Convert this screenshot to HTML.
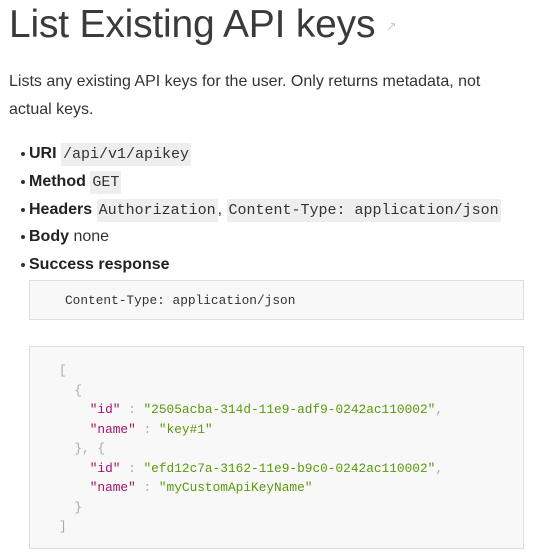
<!DOCTYPE html>
<html><head><meta charset="utf-8"><style>
body{margin:0;background:#fff;width:538px;height:556px;overflow:hidden;font-family:"Liberation Sans",sans-serif;color:#333;position:relative}
h1{position:absolute;left:9px;top:3px;margin:0;font-weight:normal;font-size:39px;color:#3a3a3a;letter-spacing:-0.2px;white-space:nowrap}
h1 span{font-size:13px;color:#ccc;vertical-align:middle}
p{position:absolute;left:9px;top:68px;margin:0;font-size:16px;line-height:28px;width:490px}
ul{position:absolute;left:0;top:140px;margin:0;padding:0 0 0 29px;font-size:16px;list-style:none}
li{position:relative;white-space:nowrap;height:27.8px;line-height:27.8px}
li:before{content:"";position:absolute;left:-8px;top:12px;width:4px;height:4px;border-radius:50%;background:#333}
b{color:#222}
code{font-family:"Liberation Mono",monospace;font-size:15px;background:#eee;padding:3px 2px}
.box{position:absolute;left:29px;width:493px;border:1px solid #ddd;background:#f8f8f8;font-family:"Liberation Mono",monospace;font-size:12.8px;color:#333;white-space:pre}
.k{color:#a0126e}.s{color:#5a9a0a}.g{color:#aaa}
</style></head><body>
<h1>List Existing API keys <span>&#x2197;</span></h1>
<p>Lists any existing API keys for the user. Only returns metadata, not actual keys.</p>
<ul>
<li><b>URI</b> <code>/api/v1/apikey</code></li>
<li><b>Method</b> <code>GET</code></li>
<li><b>Headers</b> <code>Authorization</code>, <code>Content-Type: application/json</code></li>
<li><b>Body</b> none</li>
<li><b>Success response</b></li>
</ul>
<div class="box" style="top:280px;height:40px;line-height:40px;padding-left:35px;box-sizing:border-box;width:495px">Content-Type: application/json</div>
<div class="box" style="top:346px;height:203px;box-sizing:border-box;width:495px;padding:14px 0 0 29px;line-height:19.5px"><span class="g">[
  {</span>
    <span class="k">"id"</span> <span class="g">:</span> <span class="s">"2505acba-314d-11e9-adf9-0242ac110002"</span><span class="g">,</span>
    <span class="k">"name"</span> <span class="g">:</span> <span class="s">"key#1"</span>
  <span class="g">}, {</span>
    <span class="k">"id"</span> <span class="g">:</span> <span class="s">"efd12c7a-3162-11e9-b9c0-0242ac110002"</span><span class="g">,</span>
    <span class="k">"name"</span> <span class="g">:</span> <span class="s">"myCustomApiKeyName"</span>
  <span class="g">}
]</span></div>
</body></html>
